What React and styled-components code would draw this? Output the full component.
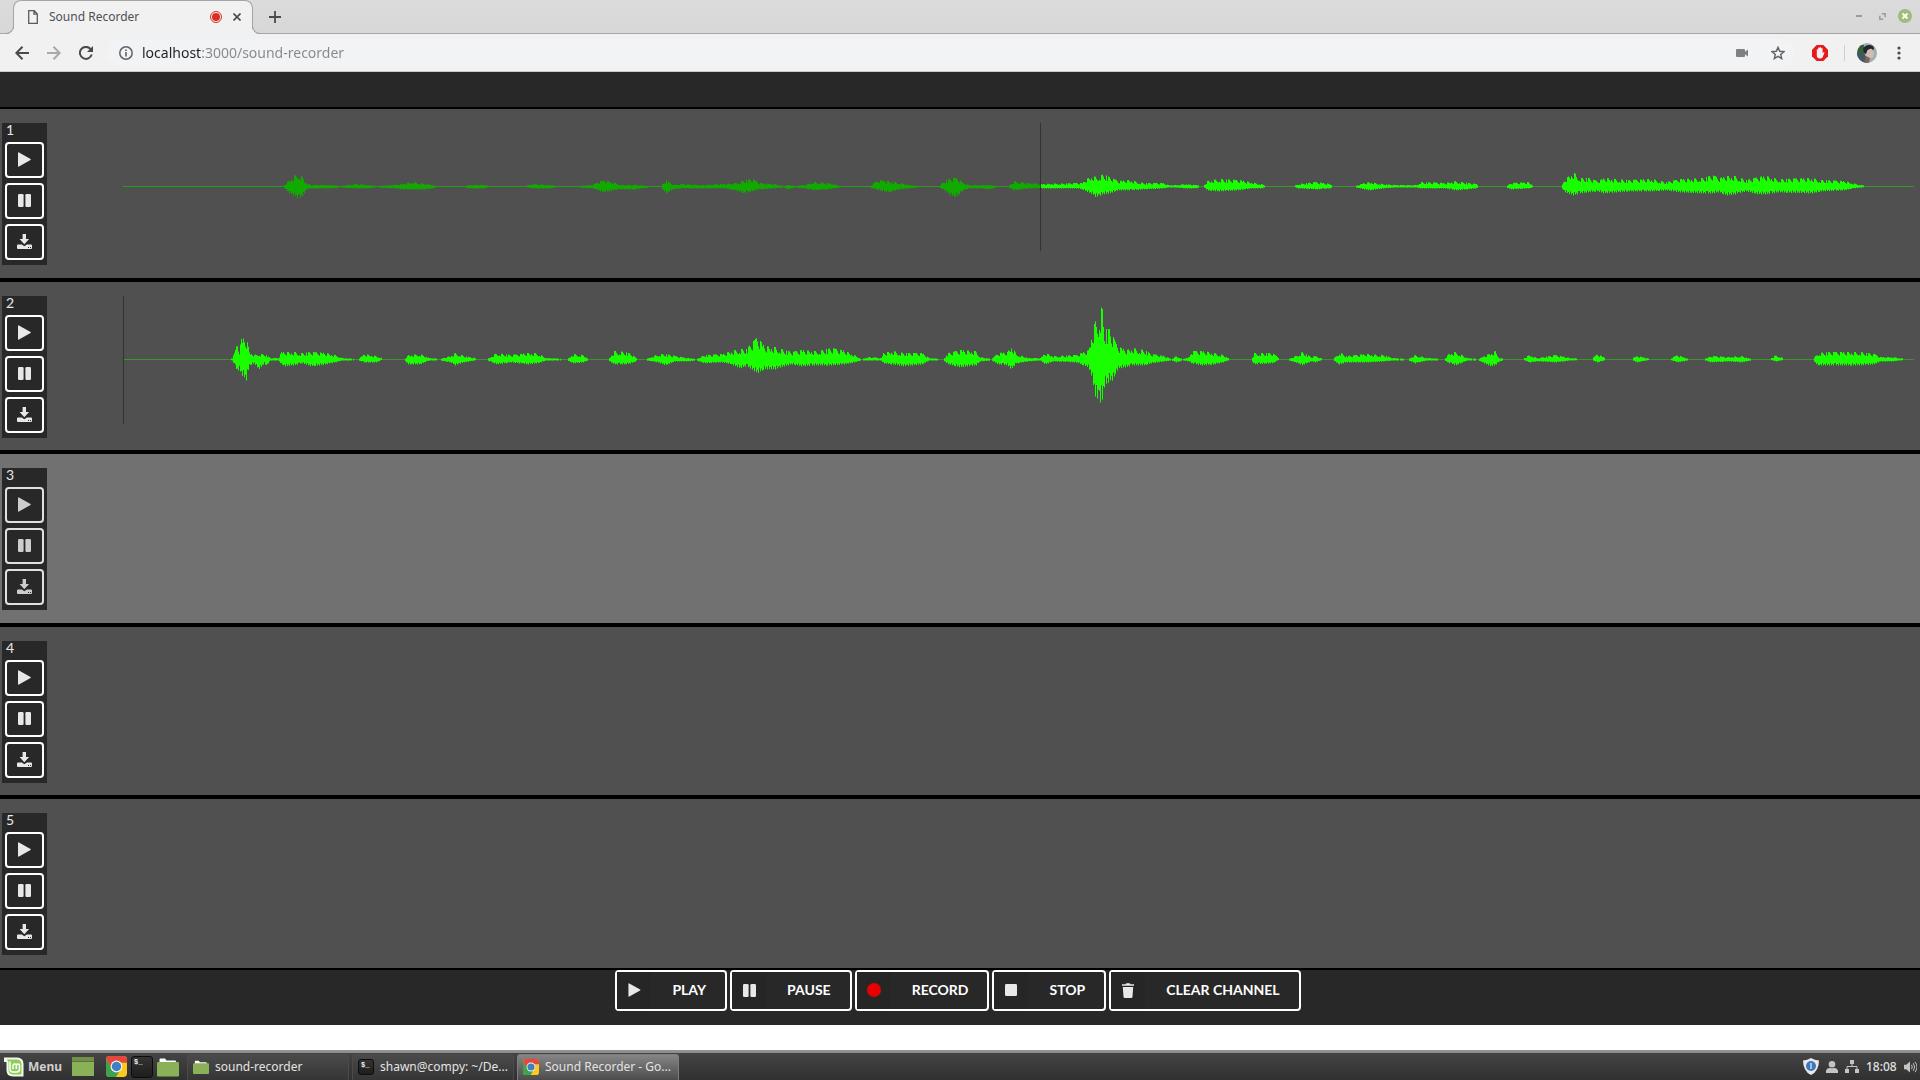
import React from "react";
import styled, { createGlobalStyle } from "styled-components";

const GlobalStyle = createGlobalStyle`
  *, *::before, *::after { box-sizing: border-box; }
  html, body { margin: 0; padding: 0; }
  body { background: #fff; font-family: "Noto Sans", sans-serif; }
  button { margin: 0; padding: 0; border: 0; background: none; color: inherit; font: inherit; cursor: pointer; }
  svg { display: block; flex: none; }
`;

/* ---------- shell ---------- */

const Desktop = styled.div`
  display: flex;
  flex-direction: column;
  min-height: 100vh;
`;

const TabStrip = styled.header`
  display: flex;
  align-items: stretch;
  height: 34px;
  padding-left: 13px;
  background: linear-gradient(#dbdbdb, #d7d7d7);
  border-bottom: 1px solid #a6a4a4;
`;

const Tab = styled.div`
  position: relative;
  display: flex;
  align-items: center;
  width: 240px;
  height: 34px;
  padding: 0 6px 2px 14px;
  background: #f1f1f1;
  border: 1px solid #a6a4a4;
  border-bottom: 0;
  border-radius: 8px 8px 0 0;
  &::before, &::after {
    content: "";
    position: absolute;
    bottom: 0;
    width: 8px;
    height: 8px;
    border-bottom: 1px solid #a6a4a4;
  }
  &::before { left: -8px; border-right: 1px solid #a6a4a4; border-bottom-right-radius: 8px; box-shadow: 3px 3px 0 #f1f1f1; }
  &::after { right: -8px; border-left: 1px solid #a6a4a4; border-bottom-left-radius: 8px; box-shadow: -3px 3px 0 #f1f1f1; }
`;

const TabTitle = styled.span`
  flex: 1;
  padding-left: 11px;
  color: #4d5054;
  font-size: 12px;
  line-height: 16px;
`;

const IconButton = styled.button`
  display: flex;
  align-items: center;
  justify-content: center;
  width: ${(p) => p.$w || 20}px;
  height: 20px;
  color: ${(p) => p.$color || "#4a4a4a"};
`;

const TabClose = styled(IconButton)`
  margin-left: 6px;
  width: 18px;
`;

const NewTab = styled(IconButton)`
  align-self: center;
  margin-left: 12px;
`;

const WindowButtons = styled.div`
  display: flex;
  align-items: center;
  gap: 3px;
  margin-left: auto;
  padding: 0 5px 1px 0;
`;

const Toolbar = styled.nav`
  display: flex;
  align-items: center;
  height: 38px;
  padding: 0 13px 0 12px;
  background: #f1f1f1;
  border-bottom: 1px solid #c9c9c9;
`;

const NavButtons = styled.div`
  display: flex;
  gap: 12px;
`;

const AddressBar = styled.form`
  display: flex;
  flex: 1;
  align-items: center;
  height: 28px;
  margin: 0 17px 0 11px;
  padding: 0 9px 0 12px;
  background: #f1f3f4;
  border-radius: 14px;
`;

const Address = styled.input`
  flex: 1;
  min-width: 0;
  height: 24px;
  margin: 0 0 0 9px;
  padding: 0;
  border: 0;
  outline: 0;
  background: linear-gradient(90deg, #202124 60px, #84888c 60px);
  -webkit-background-clip: text;
  background-clip: text;
  -webkit-text-fill-color: transparent;
  color: #84888c;
  font: 14px/20px "Noto Sans", sans-serif;
`;

const StarButton = styled(IconButton)`
  margin-left: 22px;
`;

const Divider = styled.span`
  width: 1px;
  height: 16px;
  margin: 0 12px 0 16px;
  background: #cfcfcf;
`;

const MenuButton = styled(IconButton)`
  margin-left: 14px;
`;

/* ---------- recorder page ---------- */

const Recorder = styled.main`
  display: flex;
  flex: 1;
  flex-direction: column;
  background: #282828;
  font-family: Lato, sans-serif;
`;

const TopBar = styled.div`
  height: 35px;
`;

const Channel = styled.section`
  display: flex;
  flex: 1 0 0px;
  align-items: flex-start;
  padding: 14px 6px 12px 2px;
  background: ${(p) => (p.$selected ? "#717171" : "#505050")};
  border-top: 2px solid #000;
  border-bottom: 2px solid #000;
`;

const ChannelPanel = styled.div`
  display: flex;
  flex-direction: column;
  gap: 5px;
  width: 45px;
  padding: 0 3px 5px;
  background: #282828;
`;

const ChannelNumber = styled.span`
  height: 14px;
  padding-left: 1px;
  color: #e8e8e8;
  font-size: 14px;
  line-height: 14px;
`;

const ChannelButton = styled.button`
  display: flex;
  align-items: center;
  justify-content: center;
  height: 36px;
  padding-bottom: 1px;
  border: 2px solid #fff;
  border-radius: 4px;
  background: #282828;
  color: #e8e8e8;
  opacity: ${(p) => (p.$dim ? 0.86 : 1)};
`;

const Wave = styled.svg`
  flex: 1 1 0px;
  min-width: 0;
  height: 128px;
  margin-left: 76px;
`;

const Transport = styled.footer`
  display: flex;
  justify-content: center;
  align-items: flex-start;
  gap: 3px;
  height: 55px;
  padding-right: 4px;
`;

const TransportButton = styled.button`
  display: flex;
  align-items: center;
  height: 41px;
  padding-right: 19px;
  border: 2px solid #fff;
  border-radius: 4px;
  background: #282828;
  color: #fff;
  font: 700 14px/14px Lato, sans-serif;
`;

const TransportIcon = styled.span`
  display: flex;
  align-items: center;
  justify-content: center;
  width: 34px;
  height: 37px;
  margin-right: 21px;
  background: #262626;
  color: ${(p) => p.$color || "#e8e8e8"};
`;

/* ---------- desktop taskbar ---------- */

const PageEnd = styled.div`
  height: 28px;
  background: #fff;
  border-bottom: 3px solid #b0b0b0;
  border-image: linear-gradient(#dadada, #8c8c8c) 3;
  border-width: 0 0 3px;
`;

const Taskbar = styled.footer`
  display: flex;
  align-items: center;
  height: 27px;
  padding: 0 3px 0 4px;
  background: linear-gradient(#444, #303030);
  color: #dcdcdc;
  font-size: 12px;
  line-height: 16px;
`;

const MenuLauncher = styled.button`
  display: flex;
  align-items: center;
  gap: 4px;
  width: 68px;
  color: #d0d0d0;
  font-weight: 700;
`;

const Launchers = styled.div`
  display: flex;
  align-items: center;
  gap: 4px;
  margin: 0 8px 0 12px;
`;

const TaskList = styled.div`
  display: flex;
  gap: 3px;
`;

const Task = styled.button`
  display: flex;
  align-items: center;
  gap: 6px;
  width: 162px;
  height: 26px;
  padding: 0 5px;
  border: 1px solid ${(p) => (p.$active ? "#7d7d7d" : "#4b4b4b")};
  border-bottom: 0;
  border-radius: 3px 3px 0 0;
  background: ${(p) => (p.$active ? "linear-gradient(#858585, #4c4c4c)" : "linear-gradient(#4a4a4a, #353535)")};
  color: #e4e4e4;
  white-space: nowrap;
`;

const TerminalGlyph = styled.span`
  display: flex;
  flex: none;
  width: ${(p) => p.$size}px;
  height: ${(p) => p.$size}px;
  padding-left: 2px;
  border: 1px solid #0c0c0c;
  border-radius: 3px;
  background: linear-gradient(#343434, #1d1d1d);
  color: #f2f2f2;
  font: 700 7px/10px "Liberation Mono", monospace;
`;

const Tray = styled.div`
  display: flex;
  align-items: center;
  gap: 7px;
  margin-left: auto;
`;

const Clock = styled.time`
  width: 31px;
  color: #e0e0e0;
  font-weight: 500;
`;

/* ---------- icons ---------- */

const PlayIcon = ({ h = 15 }) => (
  <svg width="13" height={h} viewBox="0 0 13 15" fill="currentColor"><path d="M0 1.2Q0 0 1 .5L12.5 7Q13.2 7.5 12.5 8L1 14.5Q0 15 0 13.8Z" /></svg>
);
const PauseIcon = () => (
  <svg width="13" height="13" viewBox="0 0 13 13" fill="currentColor"><rect width="5.6" height="13" rx="1.2" /><rect x="7.4" width="5.6" height="13" rx="1.2" /></svg>
);
const DownloadIcon = () => (
  <svg width="15" height="15" viewBox="0 0 15 15" fill="currentColor">
    <path d="M5.600 0h3.400v5h3.100L7.300 10.200 2.600 5h3z" />
    <path d="M1 10.500h3.800l2.500 1.700 2.600-1.700H14q1 0 1 1V14q0 1-1 1H1q-1 0-1-1v-2.500q0-1 1-1zM11 13v.9h1V13zm2 0v.9h1V13z" fillRule="evenodd" />
  </svg>
);
const RecordIcon = () => (
  <svg width="14" height="14" viewBox="0 0 14 14" fill="currentColor"><circle cx="7" cy="7" r="7" /></svg>
);
const StopIcon = () => (
  <svg width="12" height="12" viewBox="0 0 12 12" fill="currentColor"><rect width="12" height="12" rx="1.2" /></svg>
);
const TrashIcon = () => (
  <svg width="12" height="15" viewBox="0 0 12 15" fill="currentColor"><path d="M0 1.300h3.500L4.200.2h3.600l.7 1.100H12v1.500H0zM.8 3.900h10.400l-.7 9.800q-.1 1.200-1.200 1.200H2.700q-1.100 0-1.200-1.200z" /></svg>
);
const FolderIcon = ({ size }) => (
  <svg width={size} height={size} viewBox="0 0 22 22"><path d="M2.500 8V3.500q0-1 1-1H8l1.500 2H18q1 0 1 1V8z" fill="#fff" /><rect y="6" width="22" height="14.500" rx="1.200" fill="#8bb158" /></svg>
);
const ChromeIcon = ({ size }) => (
  <svg width={size} height={size} viewBox="0 0 20 20">
    <clipPath id={`chrome${size}`}><rect width="20" height="20" rx="3.500" /></clipPath>
    <g clipPath={`url(#chrome${size})`}>
      <rect width="20" height="20" fill="#fcc91c" />
      <path d="M0 0H20V6.500H10L5.500 12 0 3z" fill="#e4483b" />
      <path d="M0 3l6 9 7 2.500L9.500 20H0z" fill="#3fa34d" />
      <circle cx="10" cy="10" r="5.600" fill="#f3f3f3" />
      <circle cx="10" cy="10" r="4.500" fill="#3f7fc4" />
    </g>
  </svg>
);
const MintIcon = () => (
  <svg width="20" height="20" viewBox="0 0 20 20">
    <path d="M0 .5h13Q19.500.5 19.500 7v12.500H9Q2.500 19.500 2.500 13V5H0z" fill="#f3f7ee" />
    <path d="M3 2.500h9.500q5 0 5 5v10H9.500q-5 0-5-5V5z" fill="#8ccf5a" />
    <path d="M6 4.500v7.500q0 3 3 3h3.500q3 0 3-3V8.500q0-1.600-1.600-1.600t-1.600 1.600v3.500m0-3.500q0-1.600-1.600-1.600T9 8.500V12" fill="none" stroke="#fff" strokeWidth="1.500" />
  </svg>
);

/* ---------- waveform data: [x, height above, height below] ---------- */

const WAVE_ONE = [
  [160,0,0],[163,3,4],[166,6,7],[172,11,10],[175,13,13],[180,8,9],[183,3,3],[187,1,2],[208,1,2],[217,0,1],[234,2,2],[244,1,2],[253,0,1],[271,1,2],[280,2,3],[289,4,3],[304,2,3],[313,0,1],[331,0,1],[342,0,1],[346,1,2],[361,1,2],[368,0,0],[401,0,0],[409,2,2],[427,1,2],[436,0,0],[454,0,1],[469,1,2],[475,4,4],[481,6,6],[490,4,4],[497,1,3],[511,1,3],[526,0,1],[538,0,1],[539,2,3],[543,6,7],[550,1,3],[559,2,2],[577,1,2],[600,2,2],[612,3,4],[621,6,7],[629,7,5],[636,3,3],[651,2,2],[660,0,1],[665,1,3],[672,0,1],[681,1,2],[690,4,4],[705,3,3],[717,0,1],[747,0,1],[752,4,3],[756,6,4],[765,5,6],[777,3,3],[786,1,2],[795,0,1],[816,0,1],[821,5,4],[828,8,10],[834,8,10],[840,3,4],[846,1,2],[858,1,2],[866,1,3],[873,0,1],[885,0,1],[891,5,4],[906,3,2],[917,2,2],
  [954,3,2],[959,3,3],[963,7,5],[969,10,8],[973,9,11],[980,12,8],[986,9,7],[995,5,4],[1006,6,4],[1020,3,3],[1040,3,2],[1045,1,1],[1053,1,1],[1061,2,2],[1072,1,2],[1080,0,0],[1084,5,4],[1095,7,5],[1115,6,4],[1127,4,2],[1138,2,2],[1144,0,0],[1170,0,0],[1175,2,2],[1193,4,3],[1207,2,2],[1210,0,0],[1232,0,1],[1241,3,3],[1246,4,4],[1259,2,2],[1273,1,1],[1293,1,1],[1297,4,2],[1322,3,2],[1332,5,4],[1353,2,2],[1356,0,0],[1383,0,1],[1388,3,3],[1405,4,2],[1409,1,1],[1414,0,0],[1438,0,1],[1442,7,6],[1450,14,9],[1457,8,7],[1465,8,6],[1474,5,5],[1481,8,7],[1505,6,5],[1528,7,5],[1543,4,4],[1557,7,6],[1580,8,7],[1589,11,7],[1596,8,6],[1603,10,9],[1612,10,8],[1623,6,5],[1635,9,8],[1643,10,8],[1655,7,6],[1689,8,7],[1698,6,5],[1721,5,4],[1729,3,2],[1738,1,1],[1744,0,0],
];

const WAVE_TWO = [
  [103,0,0],[109,1,1],[112,9,8],[114,16,12],[116,9,10],[118,20,15],[123,21,21],[126,8,6],[131,4,4],[135,6,10],[137,5,9],[141,5,4],[143,4,7],[147,1,1],[155,1,1],[158,7,5],[162,7,7],[171,7,6],[179,6,4],[188,7,7],[203,6,5],[212,4,3],[219,1,1],[235,0,1],[241,5,3],[253,3,3],[259,1,0],[281,0,1],[285,4,5],[297,5,5],[306,1,1],[317,0,1],[327,3,3],[332,6,6],[341,3,3],[356,0,0],[364,0,1],[373,6,5],[388,4,3],[404,6,5],[414,6,4],[423,1,1],[444,0,1],[450,5,4],[460,4,3],[465,0,1],[485,0,1],[491,8,5],[502,7,5],[508,5,4],[514,0,1],[523,0,1],[535,5,3],[542,5,6],[552,3,2],[564,1,2],[573,0,1],[581,4,4],[599,5,3],[608,8,5],[617,10,9],[623,10,7],[630,18,11],[634,22,14],[641,13,10],[652,12,10],[661,9,7],[669,7,5],[678,9,7],[693,8,6],[709,11,6],[722,8,5],[731,4,3],[738,0,1],[746,2,1],[758,1,1],[760,6,4],[769,8,5],[781,6,7],[799,6,5],[806,1,1],[820,0,1],[825,6,5],[837,9,8],[853,8,6],[857,2,2],[868,0,1],[875,6,5],[884,7,6],[888,13,10],[893,5,4],[905,1,2],[917,1,1],[922,6,5],[930,3,2],[953,4,3],
  [965,9,8],[968,24,16],[971,35,32],[973,40,42],[975,44,40],[977,53,43],[979,50,42],[981,30,28],[986,30,22],[990,22,21],[993,15,12],[996,12,9],[1003,9,8],[1009,11,6],[1021,9,6],[1028,5,4],[1041,3,2],[1048,0,1],[1053,3,3],[1059,0,1],[1066,2,2],[1068,8,4],[1079,8,6],[1091,6,5],[1100,4,3],[1107,0,0],[1128,0,1],[1131,6,5],[1149,6,4],[1156,1,0],[1165,0,1],[1172,3,3],[1179,7,6],[1188,2,2],[1192,3,3],[1200,0,0],[1210,0,1],[1216,7,5],[1223,3,3],[1243,5,3],[1261,4,2],[1269,1,1],[1285,0,1],[1292,4,4],[1304,1,1],[1321,0,1],[1326,6,4],[1333,7,6],[1344,1,1],[1355,0,1],[1367,6,7],[1372,8,6],[1376,1,2],[1383,0,0],[1399,0,0],[1406,4,3],[1414,1,2],[1432,4,3],[1447,1,1],[1468,0,0],[1474,5,3],[1484,0,0],[1507,0,0],[1514,3,3],[1528,0,0],[1546,0,0],[1554,4,3],[1565,0,1],[1581,0,1],[1588,3,3],[1605,2,2],[1618,3,3],[1628,0,1],[1646,0,0],[1653,4,2],[1662,0,0],[1690,0,1],[1694,6,6],[1707,7,6],[1737,7,6],[1751,5,5],[1757,2,2],[1769,2,2],[1784,0,0],
];

const WAVE_WIDTH = 1791;

function barsPath(points, from, to) {
  let d = "";
  for (let i = 1; i < points.length; i += 1) {
    const [x0, u0, l0] = points[i - 1];
    const [x1, u1, l1] = points[i];
    for (let x = x0; x < x1; x += 1) {
      if (x < from || x >= to) continue;
      const t = (x - x0) / (x1 - x0);
      const dip = [1, 0.5, 0.8, 1, 0.6][(x * 7 + (x >> 3)) % 5];
      const dipLow = [1, 0.75, 0.95, 0.6][(x * 3 + (x >> 4)) % 4];
      const up = (u0 + (u1 - u0) * t) * dip;
      const low = (l0 + (l1 - l0) * t - 0.5) * dipLow;
      if (up + low < 0.7) continue;
      d += `M${x} ${(63 - up).toFixed(1)}h1V${(64 + low).toFixed(1)}h-1z`;
    }
  }
  return d;
}

function Waveform({ points, cursor }) {
  return (
    <Wave viewBox={`0 0 ${WAVE_WIDTH} 128`} preserveAspectRatio="none" role="img" aria-label="Waveform">
      <g shapeRendering="crispEdges">
        <rect x="0" y="63" width={WAVE_WIDTH} height="1" fill="#35992a" />
        <rect x="0" y="63" width={cursor} height="1" fill="#1fa314" />
      </g>
      <path d={barsPath(points, 0, cursor)} fill="#11ab00" />
      <path d={barsPath(points, cursor, WAVE_WIDTH)} fill="#19ff00" />
      <rect x={cursor} y="0" width="1" height="128" fill="#333" shapeRendering="crispEdges" />
    </Wave>
  );
}

const CHANNELS = [
  { id: 1, points: WAVE_ONE, cursor: 917 },
  { id: 2, points: WAVE_TWO, cursor: 0 },
  { id: 3, selected: true },
  { id: 4 },
  { id: 5 },
];

const TRANSPORT = [
  { label: "PLAY", icon: <PlayIcon h={14} /> },
  { label: "PAUSE", icon: <PauseIcon /> },
  { label: "RECORD", icon: <RecordIcon />, color: "#e80000" },
  { label: "STOP", icon: <StopIcon /> },
  { label: "CLEAR CHANNEL", icon: <TrashIcon /> },
];

function ChannelRow({ id, points, cursor, selected }) {
  return (
    <Channel $selected={selected}>
      <ChannelPanel>
        <ChannelNumber>{id}</ChannelNumber>
        <ChannelButton $dim={selected} aria-label="Play"><PlayIcon /></ChannelButton>
        <ChannelButton $dim={selected} aria-label="Pause"><PauseIcon /></ChannelButton>
        <ChannelButton $dim={selected} aria-label="Download"><DownloadIcon /></ChannelButton>
      </ChannelPanel>
      {points && <Waveform points={points} cursor={cursor} />}
    </Channel>
  );
}

function BrowserChrome() {
  return (
    <>
      <TabStrip>
        <Tab>
          <svg width="10" height="14" viewBox="0 0 10 14" fill="none" stroke="#5a5a5a" strokeWidth="1.300"><path d="M.7.7h5.600l3 3.200v9.400H.7zM6 .7V4.200h3.300" /></svg>
          <TabTitle>Sound Recorder</TabTitle>
          <svg width="12" height="12" viewBox="0 0 12 12"><circle cx="6" cy="6" r="5.500" fill="none" stroke="#d93025" strokeWidth="1" /><circle cx="6" cy="6" r="4" fill="#d93025" /></svg>
          <TabClose aria-label="Close tab">
            <svg width="8" height="8" viewBox="0 0 8 8" stroke="currentColor" strokeWidth="1.600"><path d="M.5.5l7 7M7.500.5l-7 7" /></svg>
          </TabClose>
        </Tab>
        <NewTab aria-label="New tab">
          <svg width="12" height="12" viewBox="0 0 12 12" stroke="currentColor" strokeWidth="1.800"><path d="M6 0v12M0 6h12" /></svg>
        </NewTab>
        <WindowButtons>
          <IconButton aria-label="Minimize" $color="#9a9ca0">
            <svg width="6" height="2" viewBox="0 0 6 2" fill="currentColor"><rect width="6" height="2" /></svg>
          </IconButton>
          <IconButton aria-label="Maximize" $color="#9a9ca0">
            <svg width="7" height="7" viewBox="0 0 7 7" fill="none" stroke="currentColor" strokeWidth="1.500"><path d="M2.800.8h3.400v3.400M4.200 6.200H.8V2.800" /></svg>
          </IconButton>
          <IconButton aria-label="Close window" $color="#9dbd7c">
            <svg width="14" height="14" viewBox="0 0 14 14"><circle cx="7" cy="7" r="7" fill="currentColor" /><path d="M4.500 4.500l5 5M9.500 4.500l-5 5" stroke="#fff" strokeWidth="2" /></svg>
          </IconButton>
        </WindowButtons>
      </TabStrip>
      <Toolbar>
        <NavButtons>
          <IconButton aria-label="Back">
            <svg width="14" height="14" viewBox="0 0 14 14" fill="none" stroke="currentColor" strokeWidth="2"><path d="M14 7H1.500M7.500.8L1.300 7l6.200 6.200" /></svg>
          </IconButton>
          <IconButton aria-label="Forward" $color="#a9a9a9">
            <svg width="14" height="14" viewBox="0 0 14 14" fill="none" stroke="currentColor" strokeWidth="2"><path d="M0 7h12.500M6.500.8L12.700 7l-6.200 6.200" /></svg>
          </IconButton>
          <IconButton aria-label="Reload">
            <svg width="14" height="14" viewBox="0 0 14 14"><path d="M12.700 8.500A6 6 0 1 1 11.500 3" fill="none" stroke="currentColor" strokeWidth="2" /><path d="M14 0v6H8z" fill="currentColor" /></svg>
          </IconButton>
        </NavButtons>
        <AddressBar onSubmit={(e) => e.preventDefault()}>
          <svg width="14" height="14" viewBox="0 0 14 14"><circle cx="7" cy="7" r="6.200" fill="none" stroke="#5f6368" strokeWidth="1.500" /><path d="M6.200 6h1.600v4.500H6.200zM6.200 3.400h1.600V5H6.200z" fill="#5f6368" /></svg>
          <Address aria-label="Address" defaultValue="localhost:3000/sound-recorder" spellCheck={false} />
          <svg width="12" height="8" viewBox="0 0 12 8" fill="#808080"><path d="M0 1q0-1 1-1h7q1 0 1 1v1.800L12 .4v7.200L9 5.200V7q0 1-1 1H1q-1 0-1-1z" /></svg>
          <StarButton aria-label="Bookmark this page" $w={16} $color="#5f6368">
            <svg width="14" height="14" viewBox="0 0 14 14" fill="none" stroke="currentColor" strokeWidth="1.400"><path d="M7 1.400l1.700 3.900 4.200.4-3.200 2.800 1 4.100L7 10.400l-3.700 2.200 1-4.100L1.100 5.700l4.200-.4z" /></svg>
          </StarButton>
        </AddressBar>
        <IconButton aria-label="Ad blocker" $w={16}>
          <svg width="16" height="16" viewBox="0 0 16 16"><path d="M4.700 0h6.600L16 4.700v6.600L11.300 16H4.700L0 11.300V4.700z" fill="#e8191c" /><path d="M4.800 8V4.500q.7-.7 1.300 0V3q.8-.8 1.500 0v-.6q.8-.7 1.500 0V3.500q.8-.8 1.500 0v5l1-1.500q1-.3.900.6L10.800 12q-.8 1.500-3 1.500-3 0-3-3z" fill="#f4eeee" /></svg>
        </IconButton>
        <Divider />
        <IconButton aria-label="Profile">
          <svg width="20" height="20" viewBox="0 0 20 20">
            <clipPath id="avatar"><circle cx="10" cy="10" r="10" /></clipPath>
            <g clipPath="url(#avatar)">
              <rect width="20" height="20" fill="#9fb0b5" />
              <path d="M0 2h7v11H0z" fill="#37603f" />
              <path d="M0 11l7-1 3 4v6H0z" fill="#3f5a66" />
              <path d="M8 7l7-1.500 1.500 3.500.8 2-1 .8.200 2.200-3 .8-2 2.200-3-4z" fill="#d3bdb0" />
              <path d="M6 6q2-4.500 7-4 4 .5 4 4l-1 1-2-1.500-3.500 1.500L9 11 7 10z" fill="#23262b" />
              <path d="M9 13l4 2-1 5H7z" fill="#80655c" />
            </g>
          </svg>
        </IconButton>
        <MenuButton aria-label="Browser menu" $w={16}>
          <svg width="4" height="14" viewBox="0 0 4 14" fill="currentColor"><circle cx="2" cy="2" r="1.600" /><circle cx="2" cy="7" r="1.600" /><circle cx="2" cy="12" r="1.600" /></svg>
        </MenuButton>
      </Toolbar>
    </>
  );
}

function SystemTaskbar() {
  return (
    <Taskbar>
      <MenuLauncher><MintIcon />Menu</MenuLauncher>
      <IconButton aria-label="Show desktop" $w={22}>
        <svg width="22" height="19" viewBox="0 0 22 19"><rect width="22" height="19" fill="#8bb158" /><rect width="22" height="4" fill="#718f48" /><rect y="4" width="22" height="1" fill="#5b743a" /></svg>
      </IconButton>
      <Launchers>
        <IconButton aria-label="Chrome" $w={21}><ChromeIcon size={21} /></IconButton>
        <IconButton aria-label="Terminal" $w={22}><TerminalGlyph $size={22}>$_</TerminalGlyph></IconButton>
        <IconButton aria-label="Files" $w={22}><FolderIcon size={22} /></IconButton>
      </Launchers>
      <TaskList>
        <Task><FolderIcon size={16} />sound-recorder</Task>
        <Task><TerminalGlyph $size={16}>$_</TerminalGlyph>shawn@compy: ~/De...</Task>
        <Task $active><ChromeIcon size={16} />Sound Recorder - Go...</Task>
      </TaskList>
      <Tray>
        <svg width="16" height="17" viewBox="0 0 16 17"><path d="M8 0q3.500 2.300 8 2.400Q16 13 8 17 0 13 0 2.400 4.500 2.300 8 0z" fill="#e9e9e9" /><circle cx="8" cy="8" r="5" fill="#3d78bd" /><path d="M7.200 5h1.600v6H7.200z" fill="#b9d2ee" /></svg>
        <svg width="12" height="12" viewBox="0 0 12 12" fill="#c4c4c4"><circle cx="6" cy="3.300" r="3.300" /><path d="M0 12V9.500Q1 7 4 6.800q2 1 4 0 3 .2 4 2.700V12z" /></svg>
        <svg width="14" height="13" viewBox="0 0 14 13" fill="#c4c4c4"><path d="M5 0h4v4H5zM0 9h4v4H0zM10 9h4v4h-4z" /><path d="M7 4v2.500M2 9V6.500h10V9" fill="none" stroke="#c4c4c4" /></svg>
        <Clock>18:08</Clock>
        <svg width="13" height="12" viewBox="0 0 13 12" fill="#c4c4c4"><path d="M0 3.800h2.200L6 .5v11L2.200 8.200H0z" /><path d="M7.500 3.800q1.500 2.200 0 4.400M9.300 2.200q2.600 3.800 0 7.600M11 .8q4 5.200 0 10.400" fill="none" stroke="#c4c4c4" /></svg>
      </Tray>
    </Taskbar>
  );
}

export default function App() {
  return (
    <Desktop>
      <GlobalStyle />
      <BrowserChrome />
      <Recorder>
        <TopBar />
        {CHANNELS.map((channel) => <ChannelRow key={channel.id} {...channel} />)}
        <Transport>
          {TRANSPORT.map(({ label, icon, color }) => (
            <TransportButton key={label}>
              <TransportIcon $color={color}>{icon}</TransportIcon>
              {label}
            </TransportButton>
          ))}
        </Transport>
      </Recorder>
      <PageEnd />
      <SystemTaskbar />
    </Desktop>
  );
}
